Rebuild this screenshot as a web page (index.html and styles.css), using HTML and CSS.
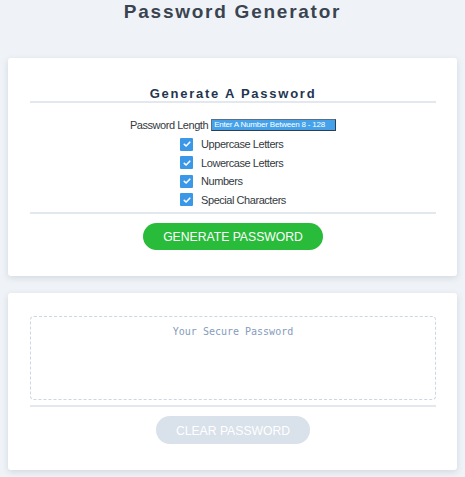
FILE: index.html
```html
<!DOCTYPE html>
<html lang="en">
<head>
<meta charset="utf-8">
<title>Password Generator</title>
<link rel="stylesheet" href="styles.css">
</head>
<body>
<div class="wrapper">
  <header class="page-header">
    <h1 class="page-title">Password Generator</h1>
  </header>

  <section class="card">
    <div class="card-header">
      <h2 class="card-title">Generate A Password</h2>
    </div>
    <div class="card-body options">
      <div class="length-row">
        <label class="opt-label" for="length">Password Length</label>
        <input class="length-input" id="length" type="text" placeholder="Enter A Number Between 8 - 128">
      </div>
      <div class="checks">
        <label class="check-row"><span class="box"><svg viewBox="0 0 12 12" width="12" height="12"><path d="M3.3 6.3 L5.1 8 L8.8 4.2" fill="none" stroke="#fff" stroke-width="1.6" stroke-linecap="round" stroke-linejoin="round"/></svg></span><span class="opt-label">Uppercase Letters</span></label>
        <label class="check-row"><span class="box"><svg viewBox="0 0 12 12" width="12" height="12"><path d="M3.3 6.3 L5.1 8 L8.8 4.2" fill="none" stroke="#fff" stroke-width="1.6" stroke-linecap="round" stroke-linejoin="round"/></svg></span><span class="opt-label">Lowercase Letters</span></label>
        <label class="check-row"><span class="box"><svg viewBox="0 0 12 12" width="12" height="12"><path d="M3.3 6.3 L5.1 8 L8.8 4.2" fill="none" stroke="#fff" stroke-width="1.6" stroke-linecap="round" stroke-linejoin="round"/></svg></span><span class="opt-label">Numbers</span></label>
        <label class="check-row"><span class="box"><svg viewBox="0 0 12 12" width="12" height="12"><path d="M3.3 6.3 L5.1 8 L8.8 4.2" fill="none" stroke="#fff" stroke-width="1.6" stroke-linecap="round" stroke-linejoin="round"/></svg></span><span class="opt-label">Special Characters</span></label>
      </div>
    </div>
    <div class="card-footer">
      <button class="btn btn-generate" type="button">GENERATE PASSWORD</button>
    </div>
  </section>

  <section class="card card-result">
    <div class="card-body">
      <textarea class="password-box" readonly placeholder="Your Secure Password"></textarea>
    </div>
    <div class="card-footer">
      <button class="btn btn-clear" type="button">CLEAR PASSWORD</button>
    </div>
  </section>
</div>
</body>
</html>
```

FILE: styles.css
```css
*, *::before, *::after { box-sizing: border-box; }

html, body {
  margin: 0;
  padding: 0;
  background: #eff3f7;
  font-family: "Liberation Sans", Arial, sans-serif;
}

.wrapper {
  padding: 0 8px;
}

.page-header {
  text-align: center;
  padding-bottom: 35px;
}

.page-title {
  margin: 0;
  font-size: 19px;
  line-height: 23px;
  font-weight: bold;
  letter-spacing: 1.75px;
  color: #3a4450;
}

.card {
  background: #ffffff;
  border-radius: 3px;
  box-shadow: 0 2px 6px rgba(40, 60, 90, 0.14);
  padding: 28px 21px 26px 22px;
  margin-bottom: 17px;
}

.card-header {
  border-bottom: 2px solid #e3e7ee;
  text-align: center;
}

.card-title {
  margin: 0;
  font-size: 13px;
  line-height: 15px;
  font-weight: bold;
  letter-spacing: 1.75px;
  color: #1f3550;
}

.options {
  display: flex;
  flex-direction: column;
  align-items: center;
  padding-top: 15px;
  padding-bottom: 3px;
  border-bottom: 2px solid #e3e7ee;
}

.opt-label {
  font-size: 11px;
  letter-spacing: -0.45px;
  color: #333a40;
}

.length-row {
  display: flex;
  align-items: center;
  gap: 3px;
  height: 13px;
}

.length-input {
  width: 125px;
  height: 12px;
  padding: 0 2px;
  border: 1px solid #2c3e50;
  border-top-color: #5a6f85;
  border-left-color: #5a6f85;
  background: #45a2ea;
  color: #ffffff;
  font-family: "Liberation Sans", Arial, sans-serif;
  font-size: 8px;
  letter-spacing: -0.2px;
  outline: none;
}

.length-input::placeholder {
  color: #ffffff;
  opacity: 1;
}

.checks {
  display: flex;
  flex-direction: column;
  margin-top: 4px;
}

.check-row {
  display: flex;
  align-items: center;
  gap: 8px;
  height: 18.5px;
}

.box {
  width: 13px;
  height: 13px;
  background: #3b98e6;
  border-radius: 1px;
  display: flex;
  align-items: center;
  justify-content: center;
}

.card-footer {
  text-align: center;
  padding-top: 9px;
}

.btn {
  border: none;
  border-radius: 14px;
  color: #ffffff;
  font-family: "Liberation Sans", Arial, sans-serif;
  font-size: 12.2px;
  line-height: 27px;
  height: 27px;
  cursor: pointer;
  text-align: center;
}

.btn-generate {
  width: 180px;
  background: #29bb3a;
}

.btn-clear {
  width: 154px;
  height: 28px;
  line-height: 28px;
  background: #d9e1ea;
}

.card-result {
  padding-top: 23px;
}

.password-box {
  display: block;
  width: 100%;
  height: 84px;
  border: 1px dashed #ccd6e5;
  border-radius: 4px;
  padding: 9px 10px;
  resize: none;
  text-align: center;
  font-family: "DejaVu Sans Mono", "Liberation Mono", monospace;
  font-size: 10px;
  color: #8aa0bd;
  background: #ffffff;
  margin-bottom: 5px;
}

.password-box::placeholder {
  color: #859cbc;
  opacity: 1;
}

.card-result .card-footer {
  border-top: 2px solid #e3e7ee;
}
```
